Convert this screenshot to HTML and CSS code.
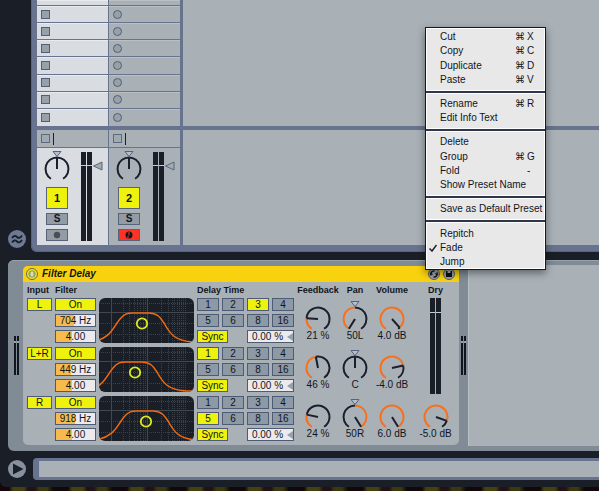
FILE: index.html
```html
<!DOCTYPE html>
<html lang="en">
<head>
<meta charset="utf-8">
<title>Filter Delay</title>
<link rel="stylesheet" href="styles.css">
</head>
<body>
<div class="app">
  <section class="session">
    <div class="rail">
      <button class="round" aria-label="Groove pool">
        <svg viewBox="0 0 18 18"><path d="M4 8q2.500-3.500 5-1t5-1.500M4 12.500q2.500-3.500 5-1t5-1.500" fill="none" stroke="#1a1f27" stroke-width="1.800"/></svg>
      </button>
    </div>
    <div class="tracks" id="tracks"></div>
  </section>

  <section class="panel">
    <div class="gutter"><div class="side-meter"><i></i><i></i></div></div>
    <article class="device">
      <header class="title">
        <button class="power" aria-label="Device on">
          <svg viewBox="0 0 12 12"><circle cx="6" cy="6" r="5.500" fill="#e8ea3a" stroke="#686b45"/><circle cx="6" cy="6" r="3.200" fill="#b4b98a" stroke="#8b8f4e"/><path d="M6 3.500v5" stroke="#f6f7c0" stroke-width="1.200"/></svg>
        </button>
        <h1>Filter Delay</h1>
        <button class="tool" aria-label="Hot-swap">
          <svg viewBox="0 0 12 12"><circle cx="6" cy="6" r="5.500" fill="#9aa3a8" stroke="#59606a"/><path d="M3 7.500A3.200 3.200 0 0 1 6.500 3M9 4.500A3.200 3.200 0 0 1 5.500 9" fill="none" stroke="#15191f" stroke-width="1.500"/><path d="M1.500 6l2-1.500L5 7zM10.500 6l-2 1.500L7 5z" fill="#15191f"/></svg>
        </button>
        <button class="tool" aria-label="Save preset">
          <svg viewBox="0 0 12 12"><circle cx="6" cy="6" r="5.500" fill="#9aa3a8" stroke="#59606a"/><path d="M3 3h6v6H3z" fill="#0c0f14"/><path d="M4.500 3h3v2h-3z" fill="#aab2b7"/></svg>
        </button>
      </header>
      <div class="controls" id="controls">
        <h2>Input</h2><h2>Filter</h2><span></span><h2>Delay Time</h2>
        <h2 class="mid">Feedback</h2><h2 class="mid">Pan</h2><h2 class="mid">Volume</h2><h2 class="mid">Dry</h2>
      </div>
    </article>
    <div class="gutter slim"><div class="side-meter"><i></i><i></i></div></div>
    <div class="drop"></div>
  </section>

  <footer class="status">
    <button class="round" aria-label="Preview">
      <svg viewBox="0 0 18 18"><path d="M5 3.500v11L15.500 9z" fill="#1a1f27"/></svg>
    </button>
    <div class="info"></div>
  </footer>
</div>

<ul class="menu" role="menu" id="menu"></ul>
<script src="app.js"></script>
</body>
</html>
```
FILE: styles.css
```css
* { box-sizing: border-box; }
body {
  margin: 0;
  min-height: 100vh;
  background: repeating-linear-gradient(90deg, #14060a 0 9px, #45400f 13px 24px, #241015 28px 35px, #3b370e 39px 47px, #0e0a08 53px 59px);
  font: 10px/12px "Liberation Sans", Arial, sans-serif;
  color: #10151d;
}
button, input { font: inherit; color: inherit; margin: 0; padding: 0; border: 0; border-radius: 0; background: none; }
svg { display: block; }
h1, h2 { margin: 0; font-size: 10px; line-height: 12px; }
h2 { font-size: 9px; white-space: nowrap; }
ul { margin: 0; padding: 0; list-style: none; }

.app { display: flex; flex-direction: column; background: #1a1f27; border-radius: 0 0 0 6px; padding-bottom: 7px; }
.round { width: 18px; height: 18px; border-radius: 50%; background: #8791a0; flex: none; }

.session { display: flex; }
.rail { width: 31px; padding: 0 0 4px 8px; display: flex; align-items: flex-end; }
.rail .round { background: #6e7a95; }
.tracks {
  flex: 1; display: flex; gap: 1px;
  padding: 0 0 7px 6px;
  background: #68748f;
  border-bottom-left-radius: 6px;
  box-shadow: inset 1px -1px #59647c;
}
.track { width: 71px; display: flex; flex-direction: column; }
.slots { height: 126px; display: grid; grid-template-rows: 6px repeat(7, 1fr); }
.slot { display: flex; align-items: center; padding-left: 4px; background: #a9b1b7; border-bottom: 1px solid #68748f; box-shadow: inset 0 1px #bac1c6; overflow: hidden; }
.slot:last-child { border-bottom: 0; }
.lit .slot, .lit .mixer { background: #d9dde2; }
.lit .slot { box-shadow: inset 0 1px #e9ecef; }
.slot button { width: 9px; height: 9px; background: #96a1aa; border: 1px solid #535f73; flex: none; }
.slot .rec { border-radius: 50%; }
.stop { height: 17px; margin: 4px 0 1px; display: flex; align-items: center; gap: 3px; padding-left: 4px; background: #a9b1b7; }
.stop button { width: 9px; height: 9px; border: 1px solid #5d6a80; background: #a0aab2; }
.stop i { width: 1px; height: 12px; background: #1a1f27; }
.mixer { height: 97px; display: flex; background: #a9b1b7; }
.strip { width: 40px; display: flex; flex-direction: column; align-items: center; gap: 4px; }
.strip .knob { margin-bottom: 3px; }
.strip button { width: 22px; height: 12px; border: 1px solid #56637b; background: #919ca6; font-weight: bold; line-height: 10px; display: grid; place-items: center; }
.strip .num { height: 22px; background: #eef20c; font-size: 11px; line-height: 20px; }
.strip .armed { background: #ff3226; }
.level { margin: 4px 0 0 4px; height: 89px; display: flex; gap: 1px; }
.level i { width: 5px; background: linear-gradient(#1a1f27 13px, #c5cbd0 13px 14px, #1a1f27 14px); }
.fader { width: 11px; height: 10px; margin-top: 13px; }
.void { flex: 1; margin-left: 2px; display: flex; flex-direction: column; gap: 4px; }
.void div { background: #a9b1b7; flex: 1; }
.void div:first-child { flex: none; height: 126px; }

.panel { display: flex; margin: 8px 0 7px 8px; background: #808b95; border-radius: 6px 0 0 6px; box-shadow: inset 0 1px #98a2aa; }
.gutter { width: 15px; display: flex; align-items: center; justify-content: center; padding-left: 2px; }
.slim { width: 9px; padding: 0; }
.side-meter { display: flex; gap: 1px; }
.side-meter i { width: 2px; height: 39px; background: linear-gradient(#12161c 5px, #98a2aa 5px 7px, #12161c 7px); }
.device { width: 436px; margin: 6px 0; background: #a9b1b7; border-radius: 5px; overflow: hidden; }
.title { display: flex; align-items: center; height: 16px; background: #f9d20f; padding: 0 4px 0 3px; gap: 3px; }
.title h1 { flex: 1; font-style: italic; padding-left: 1px; }
.power, .tool { width: 12px; height: 12px; }
.drop { flex: 1; margin: 5px 0; background: #a9b1b7; border-left: 1px solid #b8bfc4; }

.controls {
  display: grid;
  grid-template-columns: 25px 41px 95px 97px 42px 26px 42px 39px;
  grid-template-rows: 11px repeat(3, 46px);
  column-gap: 3px; row-gap: 3px;
  padding: 2px 4px 3px;
}
.mid { display: flex; justify-content: center; }
.box { height: 13px; border: 1px solid #4e5b74; text-align: center; line-height: 11px; background: #8d99a5; min-width: 0; width: 100%; display: block; }
.on { background: #eef20c; }
.col { display: flex; flex-direction: column; gap: 3px; }
input.box { background: linear-gradient(90deg, #f6bb4c var(--fill, 0%), #eceaec var(--fill, 0%)); }
.graph { width: 95px; height: 45px; background: #1a1f27; border-radius: 6px; overflow: hidden; }
.delay { display: grid; grid-template-columns: repeat(4, 1fr); gap: 3px; align-content: start; }
.sync { display: grid; grid-template-columns: 31px 47px; justify-content: space-between; grid-column: 1 / -1; }
.offset { display: grid; align-items: center; }
.offset > * { grid-area: 1 / 1; }
.offset input { padding-right: 6px; }
.offset svg { justify-self: end; margin-right: 1px; width: 6px; height: 8px; }
.dial { display: flex; flex-direction: column; align-items: center; white-space: nowrap; }
.knob { width: 30px; height: 32px; flex: none; overflow: visible; }
.dry { grid-column: 8; grid-row: 2 / 4; display: flex; justify-content: center; gap: 1px; }
.dry i { width: 5px; height: 96px; background: linear-gradient(#1a1f27 14px, #c5cbd0 14px 15px, #1a1f27 15px); }

.status { display: flex; align-items: center; gap: 7px; padding-left: 8px; }
.info { flex: 1; height: 22px; background: #a9b1b7; border: solid #68748f; border-width: 3px 0 3px 6px; border-radius: 4px 0 0 4px; }

.menu {
  position: absolute; left: 425px; top: 27px; width: 121px; height: 243px;
  display: flex; flex-direction: column;
  border: 1px solid #12182a; background: #e8e8e9;
  box-shadow: inset 1px 1px #fff, inset -1px -1px #fff, 0 3px 8px rgba(0, 0, 0, .45);
  padding-top: 2px;
}
.menu li { flex: 1; display: flex; align-items: center; position: relative; }
.menu li.rule { flex: none; height: 10px; }
.rule::before { content: ""; flex: 1; height: 4px; background: linear-gradient(#fff 1px, #2e364b 1px 3px, #fff 3px); }
.menu button { flex: 1; display: flex; padding-left: 14px; text-align: left; line-height: 14px; white-space: nowrap; }
.menu kbd { font: inherit; margin-left: auto; width: 30px; display: flex; gap: 2px; }
.menu .dash { padding-left: 12px; }
.tick { position: absolute; left: 3px; width: 8px; height: 8px; }
.cmd { font-family: "DejaVu Sans", sans-serif; }
```
FILE: app.js
```js
const INK = '#1a1f2b', HOT = '#f5711f';
const point = (a, r) => {
  const t = a * Math.PI / 180;
  return (15 + r * Math.sin(t)).toFixed(2) + ' ' + (21 - r * Math.cos(t)).toFixed(2);
};
const arc = (from, to, color) => from === to ? '' :
  `<path d="M${point(from, 11.5)}A11.5 11.5 0 ${to - from > 180 ? 1 : 0} 1 ${point(to, 11.5)}" fill="none" stroke="${color}" stroke-width="2"/>`;

// Angles are degrees clockwise from twelve o'clock.
function knob(angle, origin, marker) {
  const lo = Math.min(angle, origin), hi = Math.max(angle, origin);
  return `<svg class="knob" viewBox="0 0 30 32">${arc(-148, lo, INK)}${arc(hi, 148, INK)}${arc(lo, hi, HOT)}
    <path d="M15 21L${point(angle, 11.5)}" stroke="${INK}" stroke-width="2"/>
    ${marker ? '<path d="M11 3.500h8L15 8.500z" fill="#b3bfca" stroke="#56637b"/>' : ''}</svg>`;
}

function track(n, lit, armed) {
  const slot = `<div class="slot"><button class="${lit ? '' : 'rec'}" aria-label="Clip slot"></button></div>`;
  const dot = armed
    ? '<circle cx="5" cy="5" r="3.500" fill="#14161c"/><path d="M5 2v3.500M3 7h2" stroke="#ff3226"/>'
    : '<circle cx="5" cy="5" r="3.200" fill="#4a4d52"/>';
  return `<div class="track ${lit ? 'lit' : ''}">
    <div class="slots"><div class="slot"></div>${slot.repeat(7)}</div>
    <div class="stop"><button aria-label="Stop clips"></button><i></i></div>
    <div class="mixer"><div class="strip">${knob(0, 0, true)}
      <button class="num">${n}</button><button>S</button>
      <button class="${armed ? 'armed' : ''}" aria-label="Arm"><svg width="10" height="10" viewBox="0 0 10 10">${dot}</svg></button></div>
      <div class="level"><i></i><i></i></div>
      <svg class="fader" viewBox="0 0 11 10"><path d="M1.500 5L10 1v8z" fill="#a1abb3" stroke="#5b6678"/></svg></div></div>`;
}
document.getElementById('tracks').innerHTML =
  track(1, true, false) + track(2, false, true) + '<div class="void"><div></div><div></div></div>';

function graph(shift) {
  const fine = [24, 30, 35, 38, 41, 44, 46, 62, 69, 73, 75, 78, 80, 82, 84, 86];
  return `<svg class="graph" viewBox="0 0 95 45">
    <path d="${fine.map(x => `M${x + .5} 0V45`).join('')}M0 25.500H95M0 36.500H95M0 5.500H95" stroke="#3c424a" stroke-dasharray="1 1"/>
    <path d="M12.500 0V45M48.500 0V45M0 14.500H95" stroke="#42484f"/>
    <g transform="translate(${shift})" fill="none"><path d="M-8 44C12 41 14 29 21 21C25 16 28 15 34 15H50C58 15 61 19 65 25C71 36 76 43 94 44H106" stroke="#f26a12" stroke-width="1.500"/>
    <circle cx="43" cy="25.500" r="5.200" stroke="#dcea18" stroke-width="1.800"/></g></svg>`;
}

const rows = [
  { input: 'L', hz: '704 Hz', fill: 45, beat: 3, shift: 0, fb: [-86, '21 %'], pan: [-148, '50L'], vol: [138, '4.0 dB'] },
  { input: 'L+R', hz: '449 Hz', fill: 39, beat: 1, shift: -7, fb: [-11, '46 %'], pan: [0, 'C'], vol: [77, '-4.0 dB'] },
  { input: 'R', hz: '918 Hz', fill: 50, beat: 5, shift: 4, fb: [-78, '24 %'], pan: [148, '50R'], vol: [148, '6.0 dB'] }
];
const dial = (angle, text, origin, marker) =>
  `<div class="dial">${knob(angle, origin, marker)}<output>${text}</output></div>`;

document.getElementById('controls').insertAdjacentHTML('beforeend', rows.map((r, i) => `
  <div class="col"><button class="box on">${r.input}</button></div>
  <div class="col"><button class="box on">On</button>
    <input class="box" aria-label="Frequency" value="${r.hz}" style="--fill:${r.fill}%">
    <input class="box" aria-label="Bandwidth" value="4.00" style="--fill:41%"></div>
  ${graph(r.shift)}
  <div class="delay">${[1, 2, 3, 4, 5, 6, 8, 16].map(b => `<button class="box ${b === r.beat ? 'on' : ''}">${b}</button>`).join('')}
    <div class="sync"><button class="box on">Sync</button>
      <div class="offset"><input class="box" aria-label="Offset" value="0.00 %"><svg viewBox="0 0 6 8"><path d="M0 4L6 0v8z" fill="#96a1ab"/></svg></div></div></div>
  ${dial(...r.fb, -148, false)}${dial(...r.pan, 0, true)}${dial(...r.vol, -148, false)}
  ${i === 0 ? '<div class="dry"><i></i><i></i></div>' : ''}${i === 2 ? dial(110, '-5.0 dB', -148, false) : ''}`).join(''));

const items = [['Cut', 'X'], ['Copy', 'C'], ['Duplicate', 'D'], ['Paste', 'V'], null, ['Rename', 'R'], ['Edit Info Text'], null,
  ['Delete'], ['Group', 'G'], ['Fold', '-'], ['Show Preset Name'], null, ['Save as Default Preset'], null,
  ['Repitch'], ['Fade', '', true], ['Jump']];
document.getElementById('menu').innerHTML = items.map(it => {
  if (!it) return '<li class="rule" role="separator"></li>';
  const [name, key, on] = it;
  const kbd = !key ? '' : key === '-' ? '<kbd class="dash">-</kbd>' : `<kbd><span class="cmd">⌘</span>${key}</kbd>`;
  const tick = on ? '<svg class="tick" viewBox="0 0 8 8"><path d="M.5 4.500L3 7L7.500 1" fill="none" stroke="#1a1f27" stroke-width="1.500"/></svg>' : '';
  return `<li role="none">${tick}<button role="menuitem">${name}${kbd}</button></li>`;
}).join('');
```
